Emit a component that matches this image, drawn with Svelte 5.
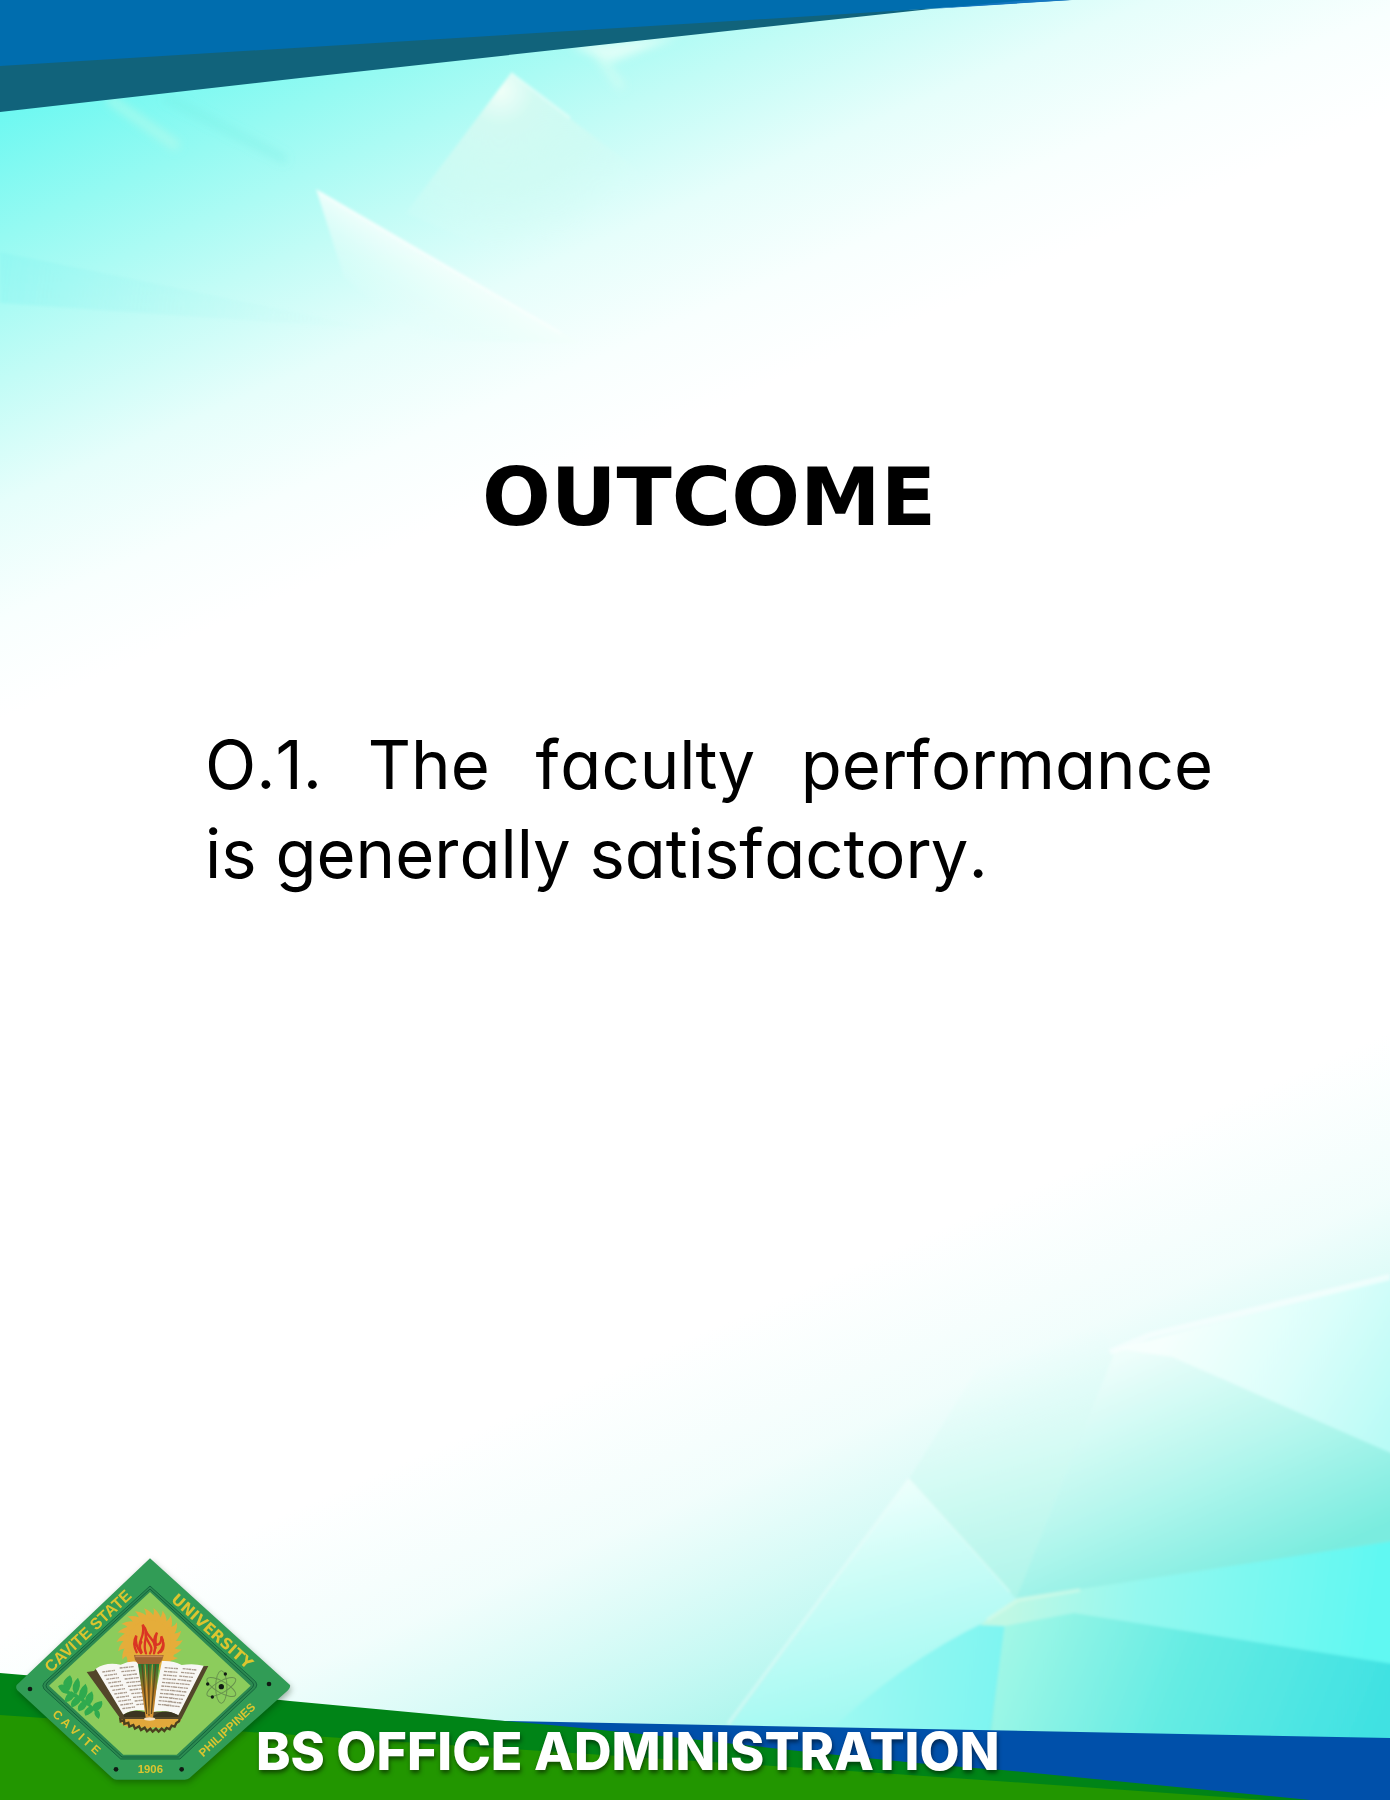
<script>
  // Teeth of the sun disc behind the torch
  const rays = Array.from({ length: 22 }, (_, i) => (i * 360) / 22);
  const leftLines = Array.from({ length: 11 }, (_, i) => i);
</script>

<div class="page">
  <svg class="backdrop" viewBox="0 0 1390 1800" preserveAspectRatio="none" aria-hidden="true">
    <defs>
      <linearGradient id="sky" gradientUnits="userSpaceOnUse" x1="0" y1="0" x2="264" y2="605">
        <stop offset="0.15" stop-color="#6cf8f1" />
        <stop offset="0.33" stop-color="#95faf2" />
        <stop offset="0.53" stop-color="#c2fcf6" />
        <stop offset="0.7" stop-color="#e6fefb" />
        <stop offset="0.86" stop-color="#f8fffe" />
        <stop offset="1" stop-color="#ffffff" />
      </linearGradient>
      <linearGradient id="sea" gradientUnits="userSpaceOnUse" x1="600" y1="1375" x2="800" y2="1834">
        <stop offset="0" stop-color="#9ef5ea" stop-opacity="0" />
        <stop offset="0.3" stop-color="#9ef5ea" stop-opacity="0.14" />
        <stop offset="0.6" stop-color="#90f3e8" stop-opacity="0.5" />
        <stop offset="1" stop-color="#7eeee0" />
      </linearGradient>
      <linearGradient id="fa" gradientUnits="userSpaceOnUse" x1="860" y1="1480" x2="930" y2="1720">
        <stop offset="0" stop-color="#f2fffd" />
        <stop offset="0.35" stop-color="#cffdf7" />
        <stop offset="1" stop-color="#9af8f1" />
      </linearGradient>
      <linearGradient id="fb" gradientUnits="userSpaceOnUse" x1="840" y1="1690" x2="1000" y2="1720">
        <stop offset="0" stop-color="#9df9f2" />
        <stop offset="1" stop-color="#7cf4f1" />
      </linearGradient>
      <linearGradient id="fc" gradientUnits="userSpaceOnUse" x1="1010" y1="1630" x2="1360" y2="1770">
        <stop offset="0" stop-color="#a0f7e6" />
        <stop offset="0.45" stop-color="#66ece3" />
        <stop offset="1" stop-color="#3fe1e2" />
      </linearGradient>
      <linearGradient id="fd" gradientUnits="userSpaceOnUse" x1="1010" y1="1600" x2="1370" y2="1650">
        <stop offset="0" stop-color="#bff8e4" />
        <stop offset="0.35" stop-color="#94f8ef" />
        <stop offset="1" stop-color="#60f8f2" />
      </linearGradient>
      <linearGradient id="fe" gradientUnits="userSpaceOnUse" x1="1130" y1="1350" x2="1235" y2="1590">
        <stop offset="0" stop-color="#effefb" />
        <stop offset="0.5" stop-color="#b8f7ee" />
        <stop offset="1" stop-color="#7aecdf" />
      </linearGradient>
      <linearGradient id="ff" gradientUnits="userSpaceOnUse" x1="990" y1="1350" x2="1060" y2="1590">
        <stop offset="0" stop-color="#ecfefb" stop-opacity="0" />
        <stop offset="0.4" stop-color="#d8fbf5" />
        <stop offset="1" stop-color="#acf5e9" />
      </linearGradient>
      <linearGradient id="fg" gradientUnits="userSpaceOnUse" x1="1180" y1="1310" x2="1390" y2="1440">
        <stop offset="0" stop-color="#f6fffd" />
        <stop offset="0.5" stop-color="#dcfefa" />
        <stop offset="1" stop-color="#b8fbf6" />
      </linearGradient>
      <radialGradient id="peak" gradientUnits="userSpaceOnUse" cx="500" cy="90" r="170">
        <stop offset="0" stop-color="#f0fff8" />
        <stop offset="0.2" stop-color="#d2faf2" />
        <stop offset="0.6" stop-color="#d2fbf3" stop-opacity="0.7" />
        <stop offset="1" stop-color="#dcfcf7" stop-opacity="0" />
      </radialGradient>
      <linearGradient id="shard" gradientUnits="userSpaceOnUse" x1="430" y1="250" x2="385" y2="325">
        <stop offset="0" stop-color="#f4fffc" />
        <stop offset="1" stop-color="#dcfdf8" stop-opacity="0" />
      </linearGradient>
      <linearGradient id="band" gradientUnits="userSpaceOnUse" x1="0" y1="280" x2="400" y2="330">
        <stop offset="0" stop-color="#86f4f0" stop-opacity="0.4" />
        <stop offset="1" stop-color="#c8f8f2" stop-opacity="0" />
      </linearGradient>
      <filter id="soft" x="-5%" y="-5%" width="110%" height="110%">
        <feGaussianBlur stdDeviation="1.5" />
      </filter>
      <filter id="softer" x="-20%" y="-20%" width="140%" height="140%">
        <feGaussianBlur stdDeviation="5" />
      </filter>
    </defs>

    <rect width="1390" height="900" fill="url(#sky)" />
    <g filter="url(#soft)">
      <path d="M0 252 L384 330 L0 303Z" fill="url(#band)" />
      <path d="M511 73 L406 213 L560 280 L680 203Z" fill="url(#peak)" />
      <path d="M511 73 L570 118" stroke="#effffa" stroke-width="3" opacity="0.5" />
      <path d="M316 189 L580 343 L420 340 L344 277Z" fill="url(#shard)" />
      <path d="M320 193 L560 333" stroke="#fff" stroke-width="3" opacity="0.4" />
    </g>
    <g filter="url(#softer)">
      <path d="M165 97 L286 160" stroke="#73ebe0" stroke-width="7" opacity="0.35" />
      <path d="M108 98 L178 147" stroke="#c5fbe9" stroke-width="9" opacity="0.5" />
      <path d="M570 46 L680 36 L612 62Z" fill="#eafff7" opacity="0.8" />
      <path d="M596 52 L622 88" stroke="#dcfdf4" stroke-width="8" opacity="0.6" />
    </g>

    <rect y="1000" width="1390" height="800" fill="url(#sea)" />
    <g filter="url(#soft)">
      <path d="M909 1479 L1060 1235 L1114 1355 L1016 1599Z" fill="url(#ff)" />
      <path d="M1116 1349 L1400 1274 L1400 1460 L1172 1357Z" fill="url(#fg)" />
      <path d="M1016 1599 L1116 1349 L1172 1357 L1400 1457 L1400 1541Z" fill="url(#fe)" />
      <path d="M909 1479 L1016 1599 L987 1621 L900 1740 L720 1740Z" fill="url(#fa)" />
      <path d="M987 1621 Q900 1662 820 1740 H989 L1005 1625Z" fill="url(#fb)" />
      <path d="M1005 1622 L1074 1610 L1400 1662 V1750 H989Z" fill="url(#fc)" />
      <path d="M1016 1599 L1400 1540 V1665 L1074 1613 L1005 1626 L980 1625Z" fill="url(#fd)" />
      <path d="M728 1724 L909 1479" stroke="#f4fffd" stroke-width="3" opacity="0.4" fill="none" />
      <path d="M909 1479 L1010 1592" stroke="#effffa" stroke-width="2" opacity="0.4" fill="none" />
      <path d="M1110 1352 L1150 1335 L1390 1277" stroke="#fbffff" stroke-width="6" opacity="0.6" fill="none" />
      <path d="M987 1620 L1018 1600 L1080 1590" stroke="#ddfbe9" stroke-width="4" opacity="0.5" fill="none" />
    </g>

    <path d="M0 60 V112 L300 78 L700 34 L940 8 L700 20Z" fill="#11637b" />
    <path d="M0 0 V66 L700 23 L940 8 L1070 0Z" fill="#006dae" />
    <path d="M930 9 L1072 0 H1030Z" fill="#1577c0" />

    <path d="M480 1720 L505 1721 L1390 1738 V1800 H480Z" fill="#0050aa" />
    <path d="M0 1673 L130 1684 L290 1701 L505 1721 C700 1738 860 1760 1002 1770 L1310 1800 H0Z" fill="#008417" />
    <path d="M0 1715 L250 1732 L895 1774 L1040 1784 L1266 1800 H0Z" fill="#229600" />
  </svg>

  <main>
    <h1>OUTCOME</h1>
    <p>
      <span class="full">O.1. The faculty performance</span>
      <span>is generally satisfactory.</span>
    </p>
  </main>

  <footer>
    <svg class="seal" viewBox="39 45 843 690" role="img" aria-label="Cavite State University seal">
      <defs>
        <linearGradient id="handle" x1="0" y1="0" x2="0" y2="1">
          <stop offset="0" stop-color="#217a35" />
          <stop offset="0.5" stop-color="#a86f22" />
          <stop offset="1" stop-color="#e09a38" />
        </linearGradient>
      </defs>
      <path d="M450 58 L870 438 Q872 446 864 454 L568 718 Q562 722 554 722 H350 Q342 722 336 716 L52 454 Q46 446 50 438Z" fill="#319c56" />
      <path d="M450 141 L767 428 Q774 438 767 447 L540 660 H362 L132 450 Q125 440 132 431Z" fill="#2c8a51" stroke="#15683e" stroke-width="3" />
      <path d="M450 150 L758 430 Q764 438 758 445 L535 654 H366 L141 448 Q135 440 141 432Z" fill="none" stroke="#14623c" stroke-width="3" />
      <path d="M450 159 L752 440 L530 647 H370 L147 440Z" fill="#8ccc5c" />

      <g fill="#e5ad3a">
        <circle cx="449" cy="306" r="72" />
        {#each rays as angle}
          <path d="M434 242 Q442 224 432 208 Q460 218 468 246Z" transform="rotate({angle} 449 306)" />
        {/each}
        <path d="M372 340 H526 L510 370 H388Z" />
      </g>

      <path d="M360 537 Q364 570 398 560 Q412 572 428 564 Q446 574 462 564 Q480 572 496 564 Q514 570 520 558 Q542 556 544 537Z" fill="#e2a83b" />
      <path d="M360 535 l2 12 l10 -4 l1 12 l12 -4 l3 12 l12 -5 l5 11 l12 -7 l6 11 l11 -7 l7 11 l10 -8 l7 9 l10 -9 l8 9 l9 -9 l8 7 l7 -9 l9 4 l6 -11 l9 3 l5 -11 l8 -5 l3 -10" fill="none" stroke="#4b3f1e" stroke-width="7" />
      <path d="M260 399 L282 396 L290 388 L375 525 L440 518 L540 518 L600 382 L625 381 L544 540 H362Z" fill="#53462a" />
      <path d="M287 389 Q320 367 362 377 Q390 364 414 369 L438 515 Q400 508 370 527Z" fill="#f8f7f4" />
      <path d="M486 366 Q520 364 545 378 Q580 372 611 380 L535 529 Q500 508 455 520Z" fill="#f8f7f4" />
      <path d="M370 527 Q400 507 438 520 V534 H372Z M457 534 Q490 503 535 529 V534Z" fill="#3a3420" />
      <g stroke="#a99b8d" stroke-width="4" fill="none" stroke-dasharray="9 2 5 1">
        {#each leftLines as n}
          <path d="M{307 + n * 6} {399 + n * 11} l38 -5 M{359 + n * 5} {387 + n * 11} l42 -4" />
          <path d="M{494 - n * 2} {386 + n * 11} l40 3 M{548 - n * 5} {389 + n * 11} l41 4" />
        {/each}
      </g>
      <path d="M414 374 H478 L459 536 H437Z" fill="url(#handle)" />
      <path d="M426 376 L440 525 M446 376 L447 530 M467 376 L454 525" stroke="#5d4a20" stroke-width="4" />
      <path d="M435 376 L444 525 M457 376 L450 525" stroke="#d69c3b" stroke-width="3" />
      <path d="M402 348 H491 L487 362 L478 375 H414 L405 362Z" fill="#9e6431" />
      <path d="M406 352 H488" stroke="#c98750" stroke-width="5" />
      <ellipse cx="449" cy="540" rx="17" ry="5" fill="#f4e2c4" />

      <g fill="none" stroke="#da3523" stroke-width="7" stroke-linecap="round">
        <path d="M410 340 Q396 313 409 290 Q403 316 423 342" />
        <path d="M425 340 C406 305 438 298 428 257 C454 287 423 306 438 343" />
        <path d="M450 343 C467 320 430 306 437 275 C448 300 475 308 462 343" />
        <path d="M475 342 Q499 318 484 292 Q485 319 468 317 Q464 301 471 281 Q455 306 467 326" />
        <path d="M420 325 Q418 318 424 309 M482 339 Q493 330 490 312" />
      </g>

      <g fill="#2faa4e">
        <path d="M194 452 Q239 460 294 518 L290 523 Q235 474 190 460Z" />
        <path d="M201 452 Q175 431 210 409 Q226 425 207 455Z M222 462 Q209 438 234 416 Q248 439 229 465Z M239 479 Q231 454 257 434 Q272 459 249 484Z M258 494 Q249 472 276 457 Q288 480 267 500Z M279 511 Q272 492 306 486 Q312 504 289 518Z" />
        <path d="M206 447 Q186 429 174 442 Q186 469 205 462Z M215 457 Q191 470 195 490 Q218 488 226 466Z M234 470 Q205 485 215 506 Q239 497 244 480Z M253 484 Q225 501 237 517 Q257 512 262 494Z M272 500 Q246 514 256 530 Q275 526 282 511Z M286 514 Q278 528 296 540 Q304 526 296 515Z" />
      </g>

      <g fill="none" stroke="#67924d" stroke-width="3">
        <ellipse cx="664" cy="444" rx="17" ry="49" />
        <ellipse cx="664" cy="444" rx="17" ry="49" transform="rotate(60 664 444)" />
        <ellipse cx="664" cy="444" rx="17" ry="49" transform="rotate(120 664 444)" />
      </g>
      <g fill="#111a14">
        <circle cx="664" cy="443" r="8" />
        <circle cx="676" cy="405" r="5" />
        <circle cx="623" cy="435" r="5" />
        <circle cx="637" cy="474" r="5" />
        <circle cx="90" cy="450" r="7" />
        <circle cx="807" cy="435" r="7" />
        <circle cx="348" cy="691" r="7" />
        <circle cx="545" cy="691" r="7" />
      </g>

      <g class="seal-text">
        <text transform="translate(275 288) rotate(-43)" font-size="48">CAVITE STATE</text>
        <text class="wide" transform="translate(626 288) rotate(42)" font-size="46">UNIVERSITY</text>
        <text transform="translate(222 589) rotate(42)" font-size="36">C A V I T E</text>
        <text transform="translate(689 581) rotate(-43)" font-size="35">PHILIPPINES</text>
        <text transform="translate(451 703)" font-size="34">1906</text>
      </g>
    </svg>
    <strong>BS OFFICE ADMINISTRATION</strong>
  </footer>
</div>

<style>
  :global(body) {
    margin: 0;
    background: #fff;
  }

  .page {
    position: relative;
    min-height: 100vh;
    display: flex;
    flex-direction: column;
    overflow: hidden;
    color: #000;
  }

  .backdrop {
    position: absolute;
    inset: 0;
    width: 100%;
    height: 100%;
  }

  main {
    position: relative;
    flex: 1;
    padding: 449px 177px 40px 205px;
  }

  h1 {
    margin: 0 0 175px;
    font: bold 81px/96px "DejaVu Sans", sans-serif;
    text-align: center;
  }

  p {
    margin: 0;
    font: 400 67px/89px Inter, sans-serif;
    font-feature-settings: "cv11";
    font-kerning: none;
  }

  p span {
    display: block;
  }

  .full {
    text-align: justify;
    text-align-last: justify;
  }

  footer {
    position: relative;
    display: flex;
    align-items: flex-end;
    padding: 0 20px 16px 13px;
  }

  .seal {
    flex: none;
    width: 281px;
    height: 230px;
    margin-right: -38px;
    filter: drop-shadow(1px 3px 3px rgba(0, 30, 0, 0.35));
  }

  .seal-text {
    fill: #dcc52f;
    font-family: "Liberation Sans", sans-serif;
    font-weight: bold;
    text-anchor: middle;
  }

  .wide {
    font-family: "DejaVu Sans", sans-serif;
  }

  strong {
    position: relative;
    font: 800 52px/64px Inter, sans-serif;
    color: #fff;
    text-shadow: 1px 3px 4px rgba(0, 0, 0, 0.5);
  }
</style>
